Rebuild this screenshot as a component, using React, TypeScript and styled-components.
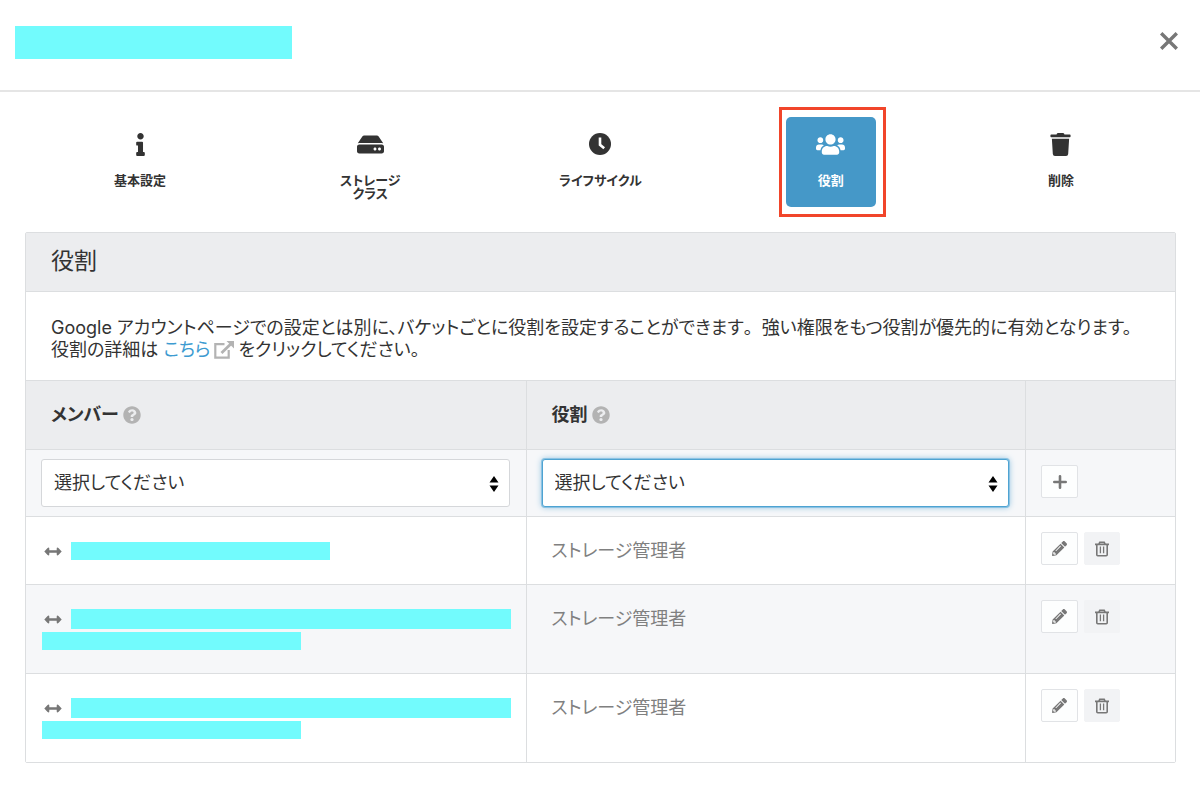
import React from "react";
import styled, { createGlobalStyle, css } from "styled-components";
import { FaInfo, FaHdd, FaUsers, FaTrash, FaPencilAlt, FaQuestionCircle } from "react-icons/fa";

const GlobalStyle = createGlobalStyle`
  *, *::before, *::after { box-sizing: border-box; }
  body {
    margin: 0;
    background: #ffffff;
    color: #333333;
    font-family: Inter, "Noto Sans CJK JP", sans-serif;
    font-size: 18px;
    line-height: 22px;
    font-feature-settings: "palt";
  }
  button, select { font: inherit; font-feature-settings: inherit; color: inherit; }
`;

const line = "#dcdee0";

const Dialog = styled.div`
  min-height: 100vh;
  background: #ffffff;
`;

const Header = styled.header`
  display: flex;
  align-items: center;
  justify-content: space-between;
  height: 92px;
  padding: 0 17px 5px 15px;
  border-bottom: 2px solid #e5e5e5;
`;

const Redacted = styled.span<{ $width?: number; $height?: number }>`
  display: block;
  ${({ $width }) => ($width ? css`width: ${$width}px;` : css`flex: 1;`)}
  height: ${({ $height = 18 }) => $height}px;
  background: #72fbfd;
`;

const CloseButton = styled.button`
  display: flex;
  padding: 4px 4px 8px;
  border: 0;
  background: none;
  color: #777777;
  cursor: pointer;
`;

const Tabs = styled.nav`
  display: grid;
  grid-template-columns: repeat(5, 1fr);
  justify-items: center;
  padding: 25px 24px 25px 25px;
`;

const Tab = styled.button<{ $active?: boolean }>`
  position: relative;
  display: flex;
  flex-direction: column;
  align-items: center;
  gap: 18px;
  width: 90px;
  height: 90px;
  padding: 15px 0 0;
  border: 0;
  border-radius: 5px;
  background: ${({ $active }) => ($active ? "#4598c8" : "transparent")};
  color: ${({ $active }) => ($active ? "#ffffff" : "#333333")};
  font-size: 13px;
  font-weight: 700;
  line-height: 13px;
  cursor: pointer;

  ${({ $active }) =>
    $active &&
    css`
      &::after {
        content: "";
        position: absolute;
        inset: -10px -10px -10px -7px;
        border: 3px solid #f1452a;
      }
    `}
`;

const TabIcon = styled.span`
  display: flex;
  align-items: center;
  height: 24px;
`;

const TabLabel = styled.span`
  white-space: pre-line;
`;

const Panel = styled.section`
  margin: 0 24px 24px 25px;
  border: 1px solid ${line};
  border-radius: 2px;
`;

const PanelTitle = styled.h2`
  margin: 0;
  padding: 13px 25px 15px;
  border-bottom: 1px solid ${line};
  background: #ecedef;
  font-size: 23px;
  font-weight: 400;
  line-height: 30px;
`;

const Description = styled.p`
  margin: 0;
  padding: 25px 25px 19px;
  border-bottom: 1px solid ${line};
`;

const FullWidth = styled.span`
  font-feature-settings: normal;
`;

const Link = styled.a`
  color: #3d9bd1;
  text-decoration: none;
`;

const InlineIcon = styled.span`
  display: inline-flex;
  margin: 0 4px;
  color: #b3b3b3;
  vertical-align: -3px;
`;

const Table = styled.table`
  width: 100%;
  border-collapse: separate;
  border-spacing: 0;
  table-layout: fixed;
`;

const ActionColumn = styled.col`
  width: 150px;
`;

const Row = styled.tr<{ $shaded?: boolean }>`
  background: ${({ $shaded }) => ($shaded ? "#f6f7f9" : "#ffffff")};

  tbody & > td { border-top: 1px solid ${line}; }
`;

const HeadCell = styled.th`
  height: 68px;
  padding: 0 25px;
  background: #ecedef;
  font-weight: 700;
  text-align: left;
  vertical-align: middle;

  & + & { border-left: 1px solid ${line}; }
`;

const cellPadding = {
  field: "9px 16px 9px 15px",
  member: "23px 15px 21px 16px",
  role: "23px 25px 22px",
  actions: "15px 15px 0",
};

const Cell = styled.td<{ $kind: keyof typeof cellPadding }>`
  padding: ${({ $kind }) => cellPadding[$kind]};
  color: #808080;
  vertical-align: top;

  & + & { border-left: 1px solid ${line}; }
`;

const SelectBox = styled.div`
  position: relative;
  color: #333333;
`;

const Select = styled.select<{ $focused?: boolean }>`
  display: block;
  width: 100%;
  height: 48px;
  padding: 0 32px 0 12px;
  border: 1px solid ${({ $focused }) => ($focused ? "#4ea3d2" : "#d5d7da")};
  border-radius: 3px;
  outline: 0;
  background: #ffffff;
  box-shadow: ${({ $focused }) => ($focused ? "0 0 0 1px #8cc3e3, 0 0 6px #7db9dc" : "none")};
  appearance: none;
`;

const SelectArrows = styled.svg`
  position: absolute;
  top: 17px;
  right: 11px;
  pointer-events: none;
`;

const MemberLine = styled.div`
  display: flex;
  align-items: center;
  height: 22px;
`;

const LinkIcon = styled.span`
  display: flex;
  width: 29px;
  padding-left: 2px;
  color: #777777;
`;

const Actions = styled.div`
  display: flex;
  gap: 6px;
`;

const IconButton = styled.button<{ $flat?: boolean }>`
  display: flex;
  align-items: center;
  justify-content: center;
  width: ${({ $flat }) => ($flat ? 36 : 37)}px;
  height: 33px;
  padding: 0;
  border: 1px solid ${({ $flat }) => ($flat ? "#f2f3f5" : "#e1e3e6")};
  border-radius: 2px;
  background: ${({ $flat }) => ($flat ? "#f2f3f5" : "#fdfefe")};
  color: #777777;
  cursor: pointer;
`;

const CloseIcon = () => (
  <svg width="20" height="20" viewBox="0 0 20 20" fill="none" stroke="currentColor" strokeWidth="3.4" aria-hidden="true">
    <path d="M2.200 2.200l15.600 15.600M17.800 2.200l-15.600 15.600" />
  </svg>
);

const ClockIcon = () => (
  <svg width="22" height="22" viewBox="0 0 22 22" aria-hidden="true">
    <circle cx="11" cy="11" r="11" fill="currentColor" />
    <path d="M11 4.500v7.300l4.200 3.400" fill="none" stroke="#ffffff" strokeWidth="2.600" />
  </svg>
);

const ExternalIcon = () => (
  <svg width="20" height="18" viewBox="0 0 20 18" fill="none" stroke="currentColor" strokeWidth="2.2" aria-hidden="true">
    <path d="M10.500 3.100H1.300V16.700H14.700V9" />
    <path d="M7.500 12L17 2.800" strokeWidth="2.800" />
    <path d="M12.500 0h7.500v7.500z" fill="currentColor" stroke="none" />
  </svg>
);

const ArrowsIcon = () => (
  <svg width="18" height="9" viewBox="0 0 18 9" aria-hidden="true">
    <path d="M0.300 4.500L3.600 0.900Q5.300 0 5.300 1.800V3.200H12.700V1.800Q12.700 0 14.400 0.900L17.700 4.500L14.400 8.100Q12.700 9 12.700 7.200V5.800H5.300V7.200Q5.300 9 3.600 8.100Z" fill="currentColor" />
  </svg>
);

const PlusIcon = () => (
  <svg width="14" height="14" viewBox="0 0 14 14" stroke="currentColor" strokeWidth="2.600" strokeLinecap="round" aria-hidden="true">
    <path d="M7 1.300v11.400M1.300 7h11.400" />
  </svg>
);

const BinIcon = () => (
  <svg width="14" height="16" viewBox="0 0 14 16" fill="none" stroke="currentColor" strokeWidth="1.600" aria-hidden="true">
    <path d="M0 3.400h14M3.800 3.400L4.800 1.200h4.400L10.200 3.400M1.800 3.500V13.700Q1.800 14.700 2.800 14.700H11.200Q12.200 14.700 12.200 13.700V3.500" />
    <path d="M5.400 5.600v6.600M8.600 5.600v6.600" strokeWidth="1.300" />
  </svg>
);

const Chooser = ({ label, focused }: { label: string; focused?: boolean }) => (
  <SelectBox>
    <Select aria-label={label} $focused={focused}>
      <option>選択してください</option>
    </Select>
    <SelectArrows width="10" height="16" viewBox="0 0 10 16" aria-hidden="true">
      <path d="M5 0L9.500 6.500H0.500ZM5 16L9.500 9.500H0.500Z" fill="#000000" />
    </SelectArrows>
  </SelectBox>
);

const Help = () => (
  <InlineIcon>
    <FaQuestionCircle size={18} />
  </InlineIcon>
);

const tabs = [
  { label: "基本設定", icon: <FaInfo size={23} /> },
  { label: "ストレージ\nクラス", icon: <FaHdd size={27} /> },
  { label: "ライフサイクル", icon: <ClockIcon /> },
  { label: "役割", icon: <FaUsers size={29} />, active: true },
  { label: "削除", icon: <FaTrash size={23} /> },
];

const members = [
  { id: 1, lines: [259] },
  { id: 2, lines: [0, 259] },
  { id: 3, lines: [0, 259] },
];

export default function App() {
  return (
    <Dialog role="dialog">
      <GlobalStyle />
      <Header>
        <Redacted $width={277} $height={33} />
        <CloseButton aria-label="閉じる">
          <CloseIcon />
        </CloseButton>
      </Header>
      <Tabs>
        {tabs.map((tab) => (
          <Tab key={tab.label} $active={tab.active}>
            <TabIcon>{tab.icon}</TabIcon>
            <TabLabel>{tab.label}</TabLabel>
          </Tab>
        ))}
      </Tabs>
      <Panel>
        <PanelTitle>役割</PanelTitle>
        <Description>
          Google アカウントページでの設定とは別に、バケットごとに役割を設定することができます
          <FullWidth>。</FullWidth>
          強い権限をもつ役割が優先的に有効となります。
          <br />
          役割の詳細は <Link href="#roles">こちら</Link>
          <InlineIcon>
            <ExternalIcon />
          </InlineIcon>
          をクリックしてください。
        </Description>
        <Table>
          <colgroup>
            <col />
            <col />
            <ActionColumn />
          </colgroup>
          <thead>
            <Row>
              <HeadCell>
                メンバー
                <Help />
              </HeadCell>
              <HeadCell>
                役割
                <Help />
              </HeadCell>
              <HeadCell />
            </Row>
          </thead>
          <tbody>
            <Row $shaded>
              <Cell $kind="field">
                <Chooser label="メンバー" />
              </Cell>
              <Cell $kind="field">
                <Chooser label="役割" focused />
              </Cell>
              <Cell $kind="actions">
                <IconButton aria-label="追加">
                  <PlusIcon />
                </IconButton>
              </Cell>
            </Row>
            {members.map((member, index) => (
              <Row key={member.id} $shaded={index % 2 === 1}>
                <Cell $kind="member">
                  {member.lines.map((width, i) => (
                    <MemberLine key={i}>
                      {i === 0 && (
                        <LinkIcon>
                          <ArrowsIcon />
                        </LinkIcon>
                      )}
                      <Redacted $width={width} $height={width ? 18 : 20} />
                    </MemberLine>
                  ))}
                </Cell>
                <Cell $kind="role">ストレージ管理者</Cell>
                <Cell $kind="actions">
                  <Actions>
                    <IconButton aria-label="編集">
                      <FaPencilAlt size={15} />
                    </IconButton>
                    <IconButton $flat aria-label="削除">
                      <BinIcon />
                    </IconButton>
                  </Actions>
                </Cell>
              </Row>
            ))}
          </tbody>
        </Table>
      </Panel>
    </Dialog>
  );
}
